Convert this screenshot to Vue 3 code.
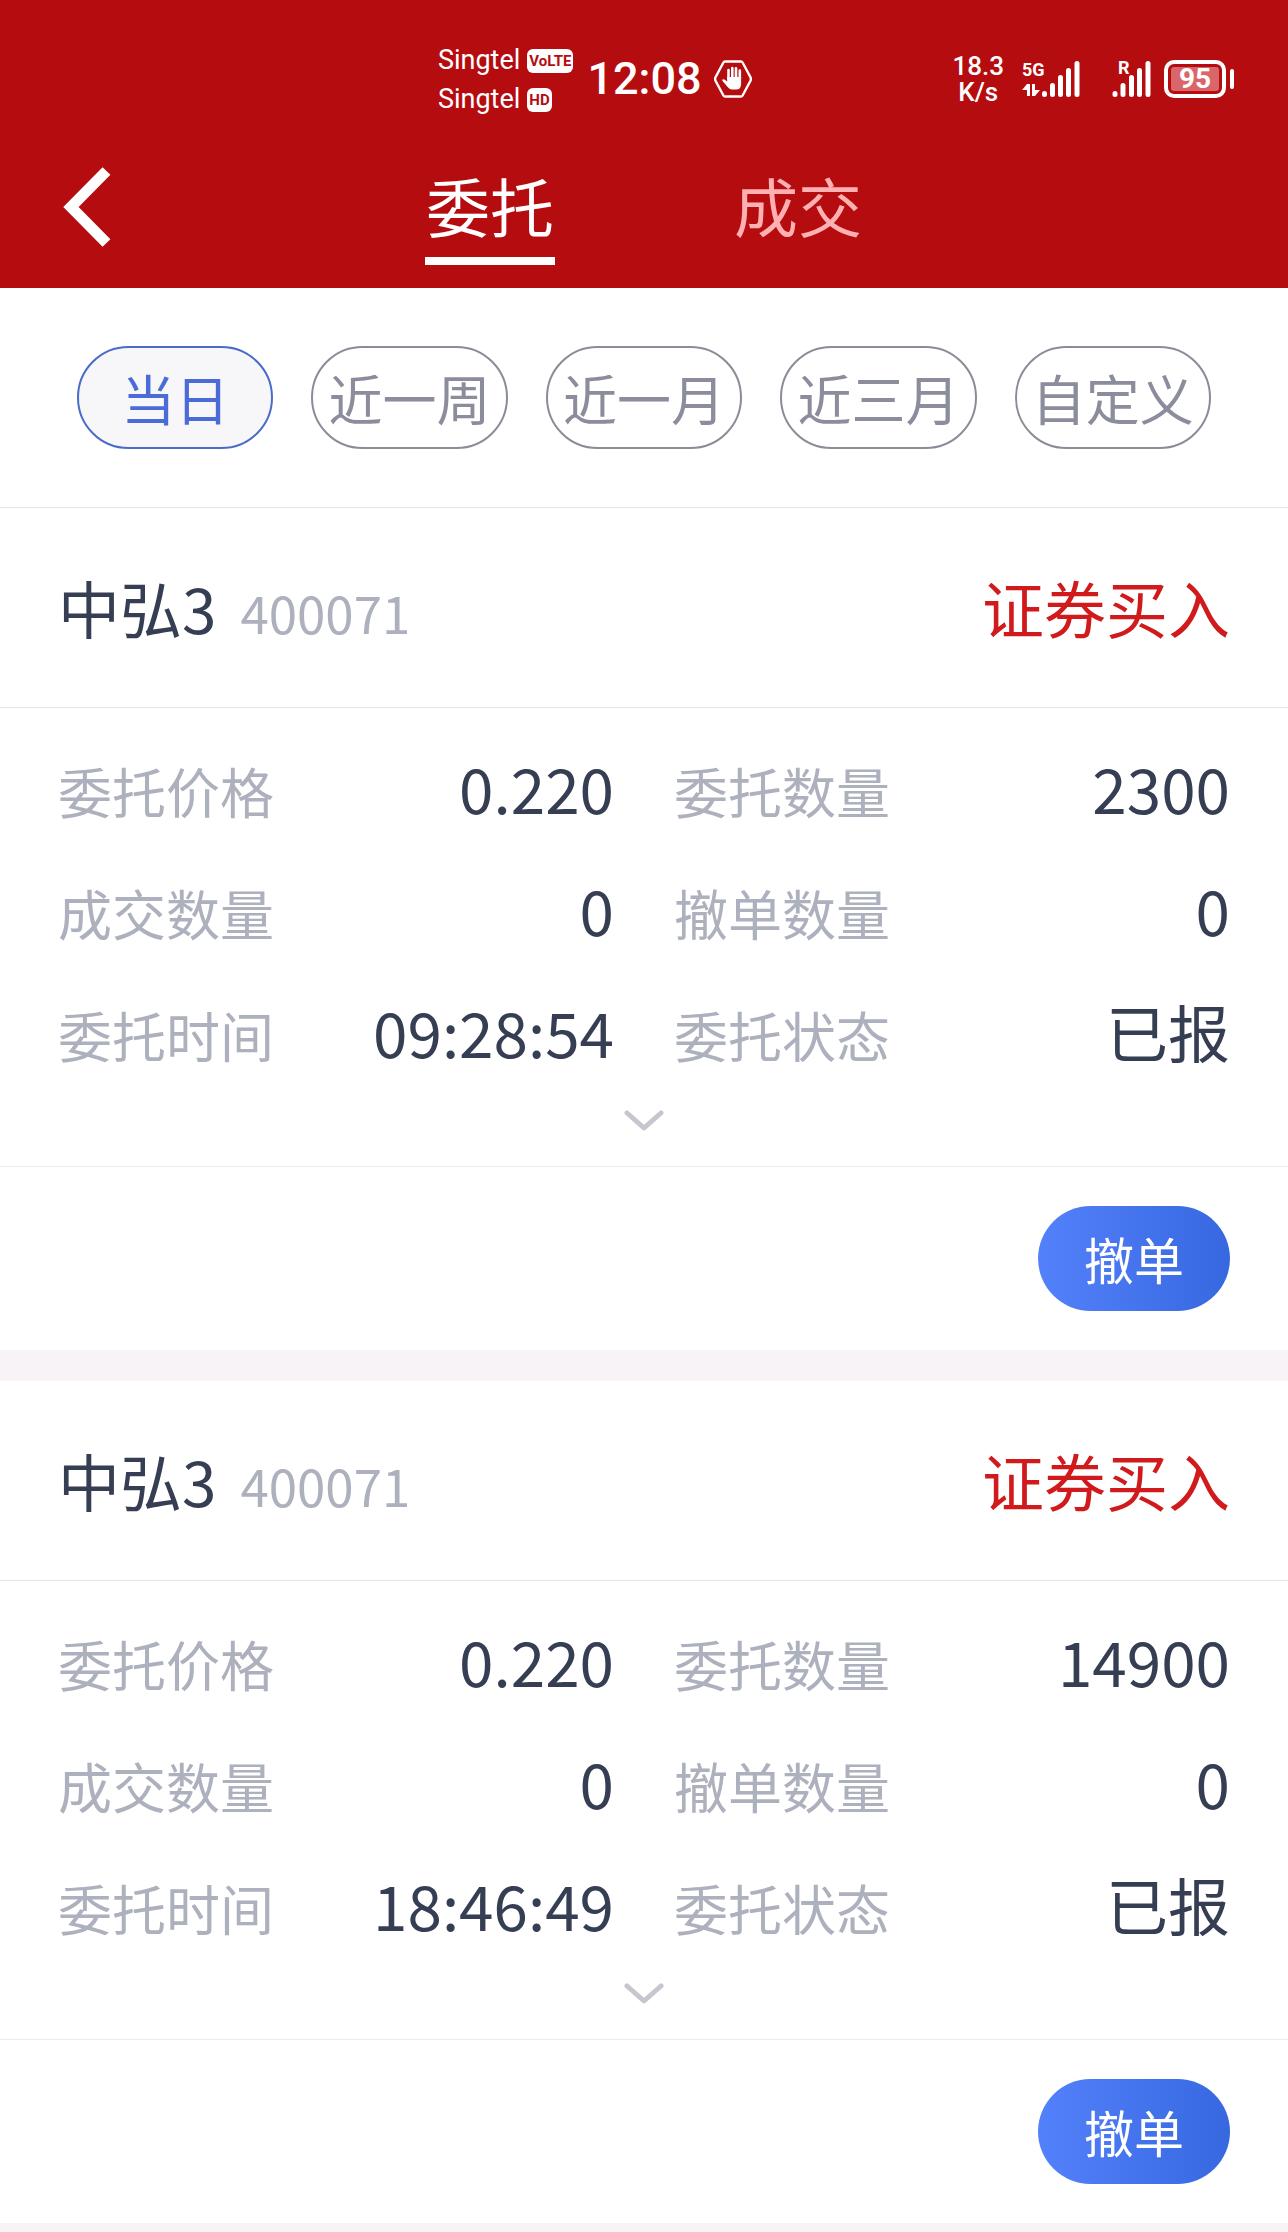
<script setup>
import { ref } from 'vue'

const tabs = ['委托', '成交']
const activeTab = ref('委托')

const ranges = ['当日', '近一周', '近一月', '近三月', '自定义']
const activeRange = ref('当日')

const orders = [
  {
    id: 1,
    name: '中弘3',
    code: '400071',
    side: '证券买入',
    fields: [
      { label: '委托价格', value: '0.220' },
      { label: '委托数量', value: '2300' },
      { label: '成交数量', value: '0' },
      { label: '撤单数量', value: '0' },
      { label: '委托时间', value: '09:28:54' },
      { label: '委托状态', value: '已报' },
    ],
  },
  {
    id: 2,
    name: '中弘3',
    code: '400071',
    side: '证券买入',
    fields: [
      { label: '委托价格', value: '0.220' },
      { label: '委托数量', value: '14900' },
      { label: '成交数量', value: '0' },
      { label: '撤单数量', value: '0' },
      { label: '委托时间', value: '18:46:49' },
      { label: '委托状态', value: '已报' },
    ],
  },
]
</script>

<template>
  <div class="page">
    <header class="top">
      <div class="status">
        <div class="status-left">
          <div class="carriers">
            <div class="carrier">Singtel <span class="badge">VoLTE</span></div>
            <div class="carrier">Singtel <span class="badge">HD</span></div>
          </div>
          <time class="clock">12:08</time>
          <svg class="hand" width="38" height="38" viewBox="0 0 38 38" aria-hidden="true">
            <path d="M11 1.5h16q1 0 1.6 1l8 15q.6 1.500 0 3l-8 15q-.6 1-1.600 1h-16q-1 0-1.600-1l-8-15q-.6-1.500 0-3l8-15q.6-1 1.600-1z" fill="none" stroke="#fff" stroke-width="2.400" />
            <path d="M14.500 19V10M18.300 17V8M22 17V8.200M25.800 19V10.600" stroke="#fff" stroke-width="2.600" stroke-linecap="round" />
            <path d="M13.200 17h13.900v7q0 5.500-5 5.500h-4q-2.500 0-4-2l-5.600-6.500q-.8-1.500.6-1.800 1.200-.2 4.100 2.300z" fill="#fff" />
          </svg>
        </div>
        <div class="status-right">
          <div class="speed">18.3<br />K/s</div>
          <svg class="signal" width="60" height="38" viewBox="0 0 60 38">
            <text class="tag" x="0" y="16">5G</text>
            <path d="M0 30l5-6h3v12H5v-6zM10 24h3v6h5l-5 6h-3z" fill="#fff" />
            <path d="M22.500 33.500v1M30.500 25.500v9M38.500 17.500v17M46.500 10.500v24M55 3.500v31" stroke="#fff" stroke-width="5" stroke-linecap="round" />
          </svg>
          <svg class="signal" width="40" height="38" viewBox="0 0 40 38">
            <text class="tag" x="6" y="14">R</text>
            <path d="M3 33.500v1M11 25.500v9M19.500 17.500v17M27.500 10.500v24M36 3.500v31" stroke="#fff" stroke-width="5" stroke-linecap="round" />
          </svg>
          <div class="battery"><span class="level">95</span></div>
        </div>
      </div>

      <nav class="nav">
        <button class="back" type="button" aria-label="返回">
          <svg width="48" height="80" viewBox="0 0 48 80" aria-hidden="true">
            <path d="M43.500 4L8 40l35.500 36" fill="none" stroke="#fff" stroke-width="11" />
          </svg>
        </button>
        <div class="tabs">
          <button
            v-for="tab in tabs"
            :key="tab"
            type="button"
            class="tab"
            :class="{ active: tab === activeTab }"
            @click="activeTab = tab"
          >{{ tab }}</button>
        </div>
      </nav>
    </header>

    <div class="ranges">
      <button
        v-for="range in ranges"
        :key="range"
        type="button"
        class="range"
        :class="{ active: range === activeRange }"
        @click="activeRange = range"
      >{{ range }}</button>
    </div>

    <main class="orders">
      <article v-for="order in orders" :key="order.id" class="order">
        <div class="head">
          <h2 class="name">{{ order.name }}<span class="code">{{ order.code }}</span></h2>
          <span class="side">{{ order.side }}</span>
        </div>
        <dl class="fields">
          <div v-for="field in order.fields" :key="field.label" class="field">
            <dt>{{ field.label }}</dt>
            <dd>{{ field.value }}</dd>
          </div>
        </dl>
        <button class="more" type="button" aria-label="展开">
          <svg width="40" height="22" viewBox="0 0 40 22" aria-hidden="true">
            <path d="M3 3l17 15L37 3" fill="none" stroke="#c6c6cf" stroke-width="5" stroke-linecap="round" stroke-linejoin="round" />
          </svg>
        </button>
        <div class="foot">
          <button class="cancel" type="button">撤单</button>
        </div>
      </article>
    </main>
  </div>
</template>

<style>
body {
  margin: 0;
  background: #f7f3f7;
}
</style>

<style scoped>
.page {
  min-height: 100vh;
  background: #f7f3f7;
  color: #363e54;
  font-family: "Noto Sans CJK SC", sans-serif;
}

button {
  margin: 0;
  padding: 0;
  border: 0;
  background: none;
  color: inherit;
  font: inherit;
  cursor: pointer;
}

svg {
  display: block;
}

.top {
  background: #b50c10;
  color: #fff;
}

.status {
  display: flex;
  align-items: center;
  justify-content: space-between;
  box-sizing: border-box;
  height: 156px;
  padding: 2px 54px 0 34%;
  font-family: Roboto, sans-serif;
}

.status-left,
.status-right {
  display: flex;
  align-items: center;
}

.carriers {
  padding-top: 2px;
}

.carrier {
  display: flex;
  align-items: center;
  gap: 7px;
  font-size: 27px;
  line-height: 39px;
}

.badge {
  padding: 0 2px;
  border-radius: 6px;
  background: #fff;
  color: #b50c10;
  font-size: 15px;
  font-weight: 700;
  line-height: 24px;
}

.clock {
  margin-left: 14px;
  font-size: 45px;
  font-weight: 500;
  line-height: 56px;
}

.hand {
  margin-left: 12px;
}

.speed {
  margin-right: 18px;
  font-size: 26px;
  font-weight: 500;
  line-height: 26px;
  text-align: center;
}

.signal {
  margin-right: 30px;
  overflow: visible;
}

.signal + .signal {
  margin-right: 12px;
}

.tag {
  fill: #fff;
  font-family: Roboto, sans-serif;
  font-size: 18px;
  font-weight: 700;
}

.battery {
  display: flex;
  align-items: center;
  gap: 4px;
}

.battery::after {
  content: "";
  width: 4px;
  height: 20px;
  border-radius: 2px;
  background: #fff;
}

.level {
  box-sizing: border-box;
  width: 62px;
  height: 38px;
  padding: 3px;
  border: 4px solid #fff;
  border-radius: 10px;
  background: #d9666b content-box;
  font-size: 28px;
  font-weight: 700;
  line-height: 24px;
  text-align: center;
}

.nav {
  display: grid;
  grid-template-columns: 1fr auto 1fr;
  align-items: start;
  height: 132px;
}

.back {
  justify-self: start;
  margin: 11px 0 0 63px;
}

.tabs {
  display: flex;
  gap: 178px;
}

.tab {
  width: 130px;
  padding-bottom: 5px;
  border-bottom: 8px solid transparent;
  color: #ffb0b2;
  font-size: 64px;
  line-height: 96px;
}

.tab.active {
  border-color: #fff;
  color: #fff;
}

.ranges {
  display: flex;
  gap: 38px;
  padding: 58px 77px;
  border-bottom: 1px solid #e6e6e8;
  background: #fff;
}

.range {
  flex: 1;
  border: 2px solid #8b8c98;
  border-radius: 52px;
  color: #8b8c9c;
  font-size: 54px;
  line-height: 99px;
  white-space: nowrap;
}

.range.active {
  border-color: #4a6cc8;
  background: #f7f7f9;
  color: #4a6bd8;
}

.order {
  margin-bottom: 31px;
  background: #fff;
}

.head {
  display: flex;
  align-items: center;
  justify-content: space-between;
  padding: 0 58px;
  border-bottom: 1px solid #e6e6e8;
  font-size: 62px;
  line-height: 199px;
}

.name {
  margin: 0;
  font-size: inherit;
  font-weight: 400;
}

.code {
  margin-left: 24px;
  color: #adb1bd;
  font-size: 51px;
  line-height: 60px;
}

.side {
  color: #d01a1b;
}

.fields {
  display: grid;
  grid-template-columns: 1fr 1fr;
  column-gap: 60px;
  margin: 0;
  padding: 18px 58px 0;
}

.field {
  display: flex;
  align-items: baseline;
  justify-content: space-between;
}

dt {
  color: #adb1bd;
  font-size: 54px;
  line-height: 100px;
}

dd {
  margin: 0;
  font-size: 62px;
  line-height: 122px;
}

.more {
  display: flex;
  justify-content: center;
  width: 100%;
  padding: 18px 0 34px;
}

.foot {
  display: flex;
  justify-content: flex-end;
  padding: 39px 58px;
  border-top: 1px solid #ebebed;
}

.cancel {
  width: 192px;
  border-radius: 53px;
  background: linear-gradient(90deg, #5381fb, #3768e0);
  color: #fff;
  font-size: 50px;
  line-height: 105px;
}
</style>
